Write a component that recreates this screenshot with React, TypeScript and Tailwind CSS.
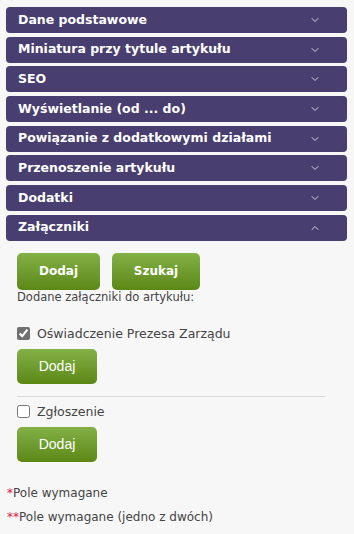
import { ChevronDown, ChevronUp } from "lucide-react";

const sections = [
  "Dane podstawowe",
  "Miniatura przy tytule artykułu",
  "SEO",
  "Wyświetlanie (od ... do)",
  "Powiązanie z dodatkowymi działami",
  "Przenoszenie artykułu",
  "Dodatki",
];

const font = { fontFamily: '"DejaVu Sans", Verdana, sans-serif' };

const SectionBar = ({ title, open }: { title: string; open?: boolean }) => (
  <div className="flex h-[26px] items-center justify-between rounded-[4px] bg-[#483e6f] pl-3 pr-[26px] text-[12.5px] font-bold text-white">
    <span>{title}</span>
    {open ? (
      <ChevronUp className="h-3 w-3 text-[#d6d2e4]" strokeWidth={2} />
    ) : (
      <ChevronDown className="h-3 w-3 text-[#d6d2e4]" strokeWidth={2} />
    )}
  </div>
);

const GreenButton = ({
  children,
  className,
}: {
  children: string;
  className: string;
}) => (
  <button
    className={`rounded-[5px] bg-gradient-to-b from-[#84b145] to-[#5b8813] text-white ${className}`}
  >
    {children}
  </button>
);

const Attachment = ({ label, checked }: { label: string; checked?: boolean }) => (
  <div className="flex flex-col">
    <label className="flex items-center gap-[7px] text-[12.5px] leading-[18px] text-[#444]">
      <input
        type="checkbox"
        defaultChecked={checked}
        className="m-0 h-[13px] w-[13px] accent-[#707070]"
      />
      {label}
    </label>
    <GreenButton className="mt-[6px] h-[35px] w-[80px] text-[14px] [font-family:'Liberation_Sans',Arial,sans-serif]">
      Dodaj
    </GreenButton>
  </div>
);

export default function App() {
  return (
    <div className="min-h-[534px] w-[354px] bg-[#f7f7f7] pt-[7px]" style={font}>
      <div className="flex flex-col gap-[3.7px] px-[6px] pr-[7px]">
        {sections.map((s) => (
          <SectionBar key={s} title={s} />
        ))}
        <SectionBar title="Załączniki" open />
      </div>
      <div className="px-[17px] pt-3">
        <div className="flex gap-3">
          <GreenButton className="h-[37px] w-[83px] text-[12px] font-bold">Dodaj</GreenButton>
          <GreenButton className="h-[37px] w-[88px] text-[12px] font-bold">Szukaj</GreenButton>
        </div>
        <div className="text-[11.5px] leading-[14px] text-[#444]">Dodane załączniki do artykułu:</div>
        <div className="mt-[21px] w-[308px] border-b border-[#d8d8d8] pb-3">
          <Attachment label="Oświadczenie Prezesa Zarządu" checked />
        </div>
        <div className="mt-[6px]">
          <Attachment label="Zgłoszenie" />
        </div>
      </div>
      <div className="px-[7px] pt-[19px] text-[12px] leading-6 text-[#444]">
        <div>
          <span className="text-[#e0204a]">*</span>Pole wymagane
        </div>
        <div>
          <span className="text-[#e0204a]">**</span>Pole wymagane (jedno z dwóch)
        </div>
      </div>
    </div>
  );
}
